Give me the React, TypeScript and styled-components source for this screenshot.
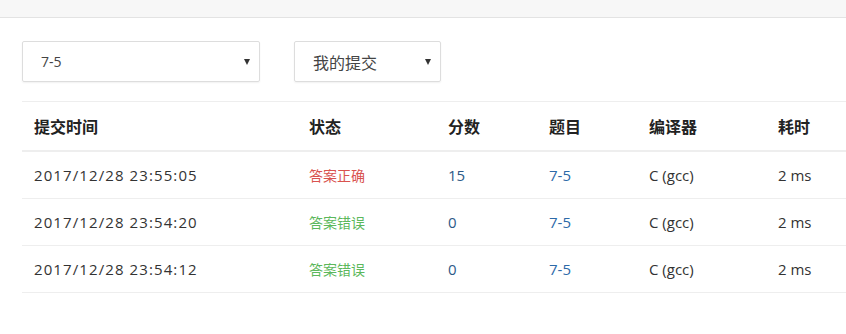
import styled, { createGlobalStyle } from "styled-components";

const GlobalStyle = createGlobalStyle`
  body {
    margin: 0;
    background: #fff;
    font-family: "Open Sans", "Noto Sans CJK SC", sans-serif;
    color: #333;
    overflow: hidden;
  }
`;

const TopBar = styled.div`
  height: 17px;
  background: #f7f7f7;
  border-bottom: 1px solid #e3e3e3;
`;

const Page = styled.div`
  padding: 23px 0 0 22px;
`;

const Filters = styled.div`
  display: flex;
  gap: 34px;
  margin-bottom: 19px;
`;

const SelectBox = styled.div<{ $width: number; $big?: boolean }>`
  width: ${(p) => p.$width}px;
  height: 41px;
  box-sizing: border-box;
  border: 1px solid #ddd;
  border-radius: 2px;
  box-shadow: 0 1px 2px rgba(0, 0, 0, 0.06);
  display: flex;
  align-items: center;
  justify-content: space-between;
  padding: 0 9px 0 18px;
  font-size: ${(p) => (p.$big ? 16 : 14)}px;
  color: #444;
`;

const Caret = styled.span`
  width: 0;
  height: 0;
  border-left: 3.5px solid transparent;
  border-right: 3.5px solid transparent;
  border-top: 6px solid #333;
`;

const Table = styled.table`
  border-collapse: collapse;
  width: 874px;
  border-top: 1px solid #eee;
  font-size: 15px;
  table-layout: fixed;
`;

const Th = styled.th<{ $w: number }>`
  width: ${(p) => p.$w}px;
  box-sizing: border-box;
  text-align: left;
  font-weight: bold;
  font-size: 16px;
  color: #222;
  padding: 0 12px;
  height: 49px;
  border-bottom: 2px solid #eee;
`;

const Td = styled.td<{ $color?: string; $small?: boolean; $spaced?: boolean }>`
  padding: 0 12px;
  height: 46px;
  border-bottom: 1px solid #eee;
  color: ${(p) => p.$color || "#333"};
  font-size: ${(p) => (p.$small ? 14 : 15)}px;
  letter-spacing: ${(p) => (p.$spaced ? "1.1px" : "0")};
  white-space: nowrap;
`;

const rows = [
  { time: "2017/12/28 23:55:05", status: "答案正确", ok: true, score: "15" },
  { time: "2017/12/28 23:54:20", status: "答案错误", ok: false, score: "0" },
  { time: "2017/12/28 23:54:12", status: "答案错误", ok: false, score: "0" },
];

export default function App() {
  return (
    <>
      <GlobalStyle />
      <TopBar />
      <Page>
        <Filters>
          <SelectBox $width={238}>
            7-5
            <Caret />
          </SelectBox>
          <SelectBox $width={147} $big>
            我的提交
            <Caret />
          </SelectBox>
        </Filters>
        <Table>
          <thead>
            <tr>
              <Th $w={275}>提交时间</Th>
              <Th $w={139}>状态</Th>
              <Th $w={101}>分数</Th>
              <Th $w={100}>题目</Th>
              <Th $w={129}>编译器</Th>
              <Th $w={130}>耗时</Th>
            </tr>
          </thead>
          <tbody>
            {rows.map((r) => (
              <tr key={r.time}>
                <Td $spaced>{r.time}</Td>
                <Td $small $color={r.ok ? "#d9534f" : "#5cb85c"}>
                  {r.status}
                </Td>
                <Td $color="#2d5a88">{r.score}</Td>
                <Td $color="#2d6aa8">7-5</Td>
                <Td>C (gcc)</Td>
                <Td>2 ms</Td>
              </tr>
            ))}
          </tbody>
        </Table>
      </Page>
    </>
  );
}
